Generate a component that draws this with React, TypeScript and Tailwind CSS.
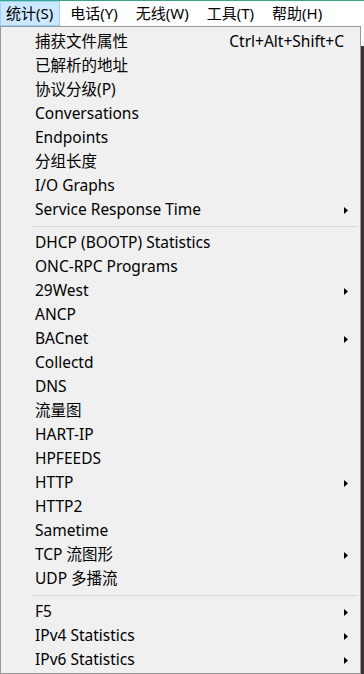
const menus = ["统计(S)", "电话(Y)", "无线(W)", "工具(T)", "帮助(H)"];

type Item = { label?: string; shortcut?: string; sub?: boolean; sep?: boolean };

const items: Item[] = [
  { label: "捕获文件属性", shortcut: "Ctrl+Alt+Shift+C" },
  { label: "已解析的地址" },
  { label: "协议分级(P)" },
  { label: "Conversations" },
  { label: "Endpoints" },
  { label: "分组长度" },
  { label: "I/O Graphs" },
  { label: "Service Response Time", sub: true },
  { sep: true },
  { label: "DHCP (BOOTP) Statistics" },
  { label: "ONC-RPC Programs" },
  { label: "29West", sub: true },
  { label: "ANCP" },
  { label: "BACnet", sub: true },
  { label: "Collectd" },
  { label: "DNS" },
  { label: "流量图" },
  { label: "HART-IP" },
  { label: "HPFEEDS" },
  { label: "HTTP", sub: true },
  { label: "HTTP2" },
  { label: "Sametime" },
  { label: "TCP 流图形", sub: true },
  { label: "UDP 多播流" },
  { sep: true },
  { label: "F5", sub: true },
  { label: "IPv4 Statistics", sub: true },
  { label: "IPv6 Statistics", sub: true },
];

const Arrow = () => (
  <svg width="4" height="7" viewBox="0 0 4 7" className="shrink-0">
    <path d="M0 0 L4 3.5 L0 7 Z" fill="#000" />
  </svg>
);

export default function App() {
  return (
    <div
      className="w-[364px] h-[674px] bg-white overflow-hidden flex flex-col text-black"
      style={{ fontFamily: '"Noto Sans", "Noto Sans CJK SC", sans-serif' }}
    >
      <div className="h-px bg-[#3aa58c] shrink-0" />
      <div className="h-[25px] flex items-stretch shrink-0 text-[15px]">
        {menus.map((m, i) => (
          <div
            key={m}
            className={
              i === 0
                ? "flex items-center pl-[5px] pr-[6px] bg-[#cce8ff] border border-[#99d1ff]"
                : "flex items-center pl-[9px] pr-[7px] border border-transparent"
            }
          >
            {m}
          </div>
        ))}
      </div>
      <div className="flex flex-1 min-h-0">
        <div className="w-[361px] bg-[#f0f0f0] border border-[#979797] pt-[3px]">
          {items.map((it, i) =>
            it.sep ? (
              <div key={i} className="h-[9px] flex items-center pl-[31px] pr-[2px]">
                <div className="h-px w-full bg-[#d7d7d7]" />
              </div>
            ) : (
              <div key={i} className="h-6 flex items-center pl-[34px] pr-[12px] text-[15.5px]">
                <span className="flex-1">{it.label}</span>
                {it.shortcut && <span className="mr-[4px]">{it.shortcut}</span>}
                {it.sub && <Arrow />}
              </div>
            )
          )}
        </div>
        <div className="flex-1 flex flex-col">
          <div className="h-[20px] bg-white" />
          <div className="flex-1 bg-[#3a3030]" />
        </div>
      </div>
    </div>
  );
}
